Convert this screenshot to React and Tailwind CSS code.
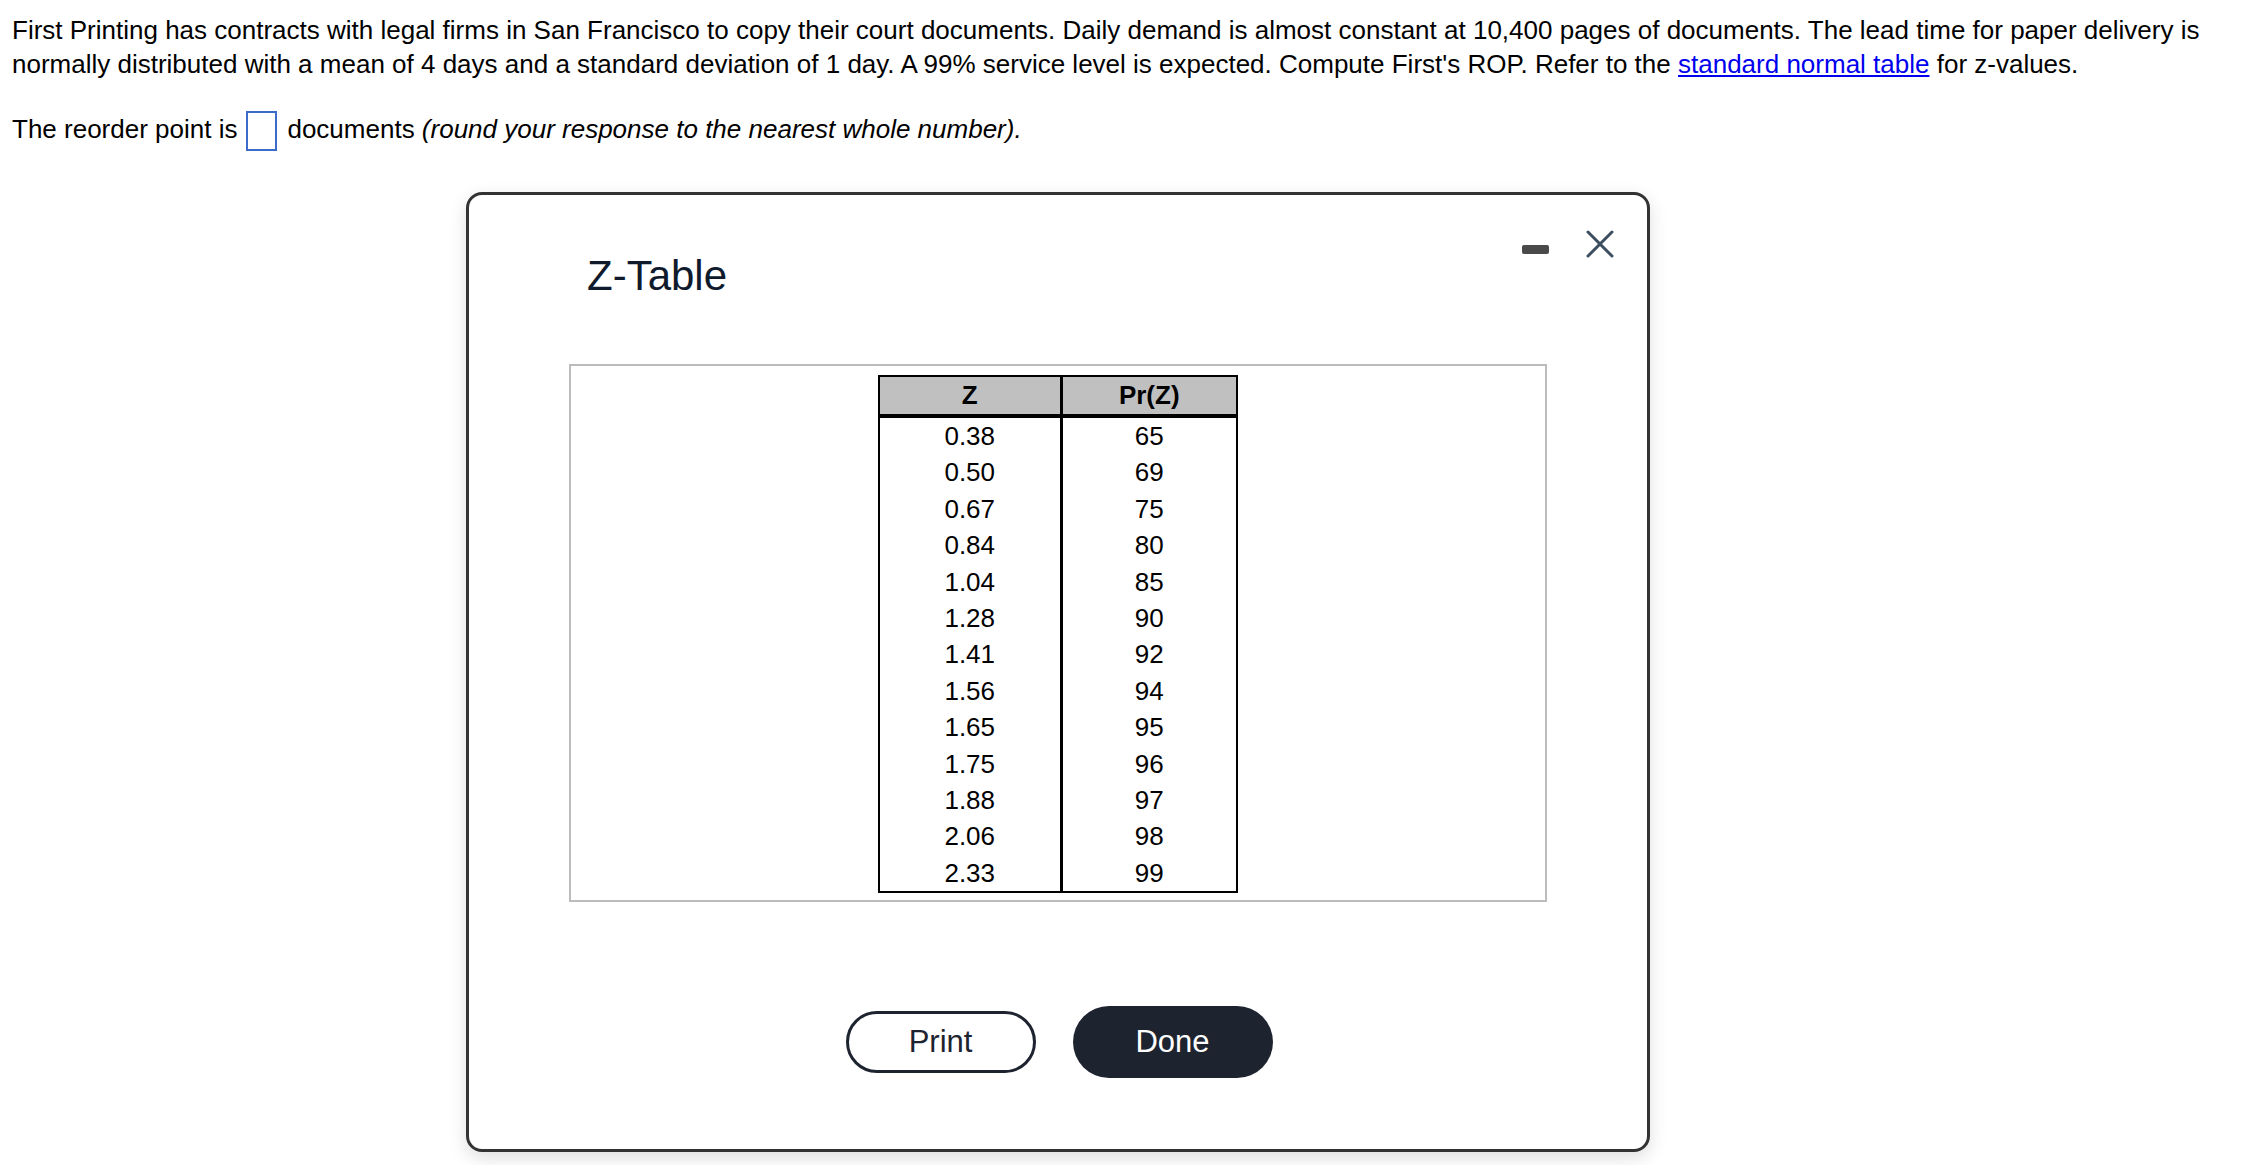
import React from 'react';

const rows = [
  ['0.38', '65'],
  ['0.50', '69'],
  ['0.67', '75'],
  ['0.84', '80'],
  ['1.04', '85'],
  ['1.28', '90'],
  ['1.41', '92'],
  ['1.56', '94'],
  ['1.65', '95'],
  ['1.75', '96'],
  ['1.88', '97'],
  ['2.06', '98'],
  ['2.33', '99'],
];

const CloseIcon = () => (
  <svg width="28" height="28" viewBox="0 0 28 28" fill="none">
    <path d="M2 2L26 26M26 2L2 26" stroke="#3d4e5e" strokeWidth="3" strokeLinecap="round" />
  </svg>
);

const ZTableModal = () => {
  return (
    <div className="ml-[466px] mt-[41px] w-[1184px] h-[960px] box-border border-[3px] border-[#333333] rounded-[16px] bg-white shadow-[0_6px_18px_rgba(0,0,0,0.13)] flex flex-col">
      {/* header */}
      <div className="flex justify-between items-start pl-[118px] pr-[33px] pt-[35px]">
        <h2 className="mt-[25px] text-[42px] leading-[42px] text-[#0f1a2d]">Z-Table</h2>
        <div className="flex items-start gap-[37px]">
          <div className="mt-[15px] w-[27px] h-[9px] rounded-[2px] bg-[#4a4a4a]" />
          <CloseIcon />
        </div>
      </div>

      {/* table frame */}
      <div className="mx-[100px] mt-[67px] h-[538px] box-border border-2 border-[#bcbcbc] flex justify-center pt-[9px]">
        <table className="border-collapse border-2 border-black text-[26px] text-black self-start">
          <thead>
            <tr className="bg-[#c0c0c0]">
              <th className="w-[182px] h-[37px] leading-[37px] font-bold border-b-4 border-r-[3px] border-black">Z</th>
              <th className="w-[176px] h-[37px] leading-[37px] font-bold border-b-4 border-black">Pr(Z)</th>
            </tr>
          </thead>
          <tbody>
            {rows.map(([z, p]) => (
              <tr key={z}>
                <td className="h-[36.4px] leading-[36.4px] text-center border-r-[3px] border-black">{z}</td>
                <td className="h-[36.4px] leading-[36.4px] text-center">{p}</td>
              </tr>
            ))}
          </tbody>
        </table>
      </div>

      {/* buttons */}
      <div className="mt-[104px] flex justify-center items-center gap-[37px] pl-[2px]">
        <button className="w-[190px] h-[62px] box-border rounded-full border-[3px] border-[#1e2330] text-[31px] text-[#1e2330]">
          Print
        </button>
        <button className="w-[200px] h-[72px] rounded-full bg-[#1e2330] text-[31px] text-white">
          Done
        </button>
      </div>
    </div>
  );
};

const App = () => {
  return (
    <div className="min-h-[1165px] bg-white text-black font-['Liberation_Sans',Arial,sans-serif]">
      <div className="pl-[12px] pr-[12px] pt-[13px]">
        <p className="text-[26px] leading-[34px]">
          First Printing has contracts with legal firms in San Francisco to copy their court documents. Daily demand is
          almost constant at 10,400 pages of documents. The lead time for paper delivery is normally distributed with a
          mean of 4 days and a standard deviation of 1 day. A 99% service level is expected. Compute First's ROP. Refer
          to the <a href="#" className="text-[#0000ee] underline">standard normal table</a> for z-values.
        </p>
        <p className="mt-[30px] text-[26px] leading-[34px]">
          The reorder point is
          <span className="inline-block align-middle ml-[9px] mr-[10px] w-[31px] h-[40px] box-border border-2 border-[#3b6cc9]" />
          documents <span className="italic">(round your response to the nearest whole number).</span>
        </p>
      </div>
      <ZTableModal />
    </div>
  );
};

export default App;
